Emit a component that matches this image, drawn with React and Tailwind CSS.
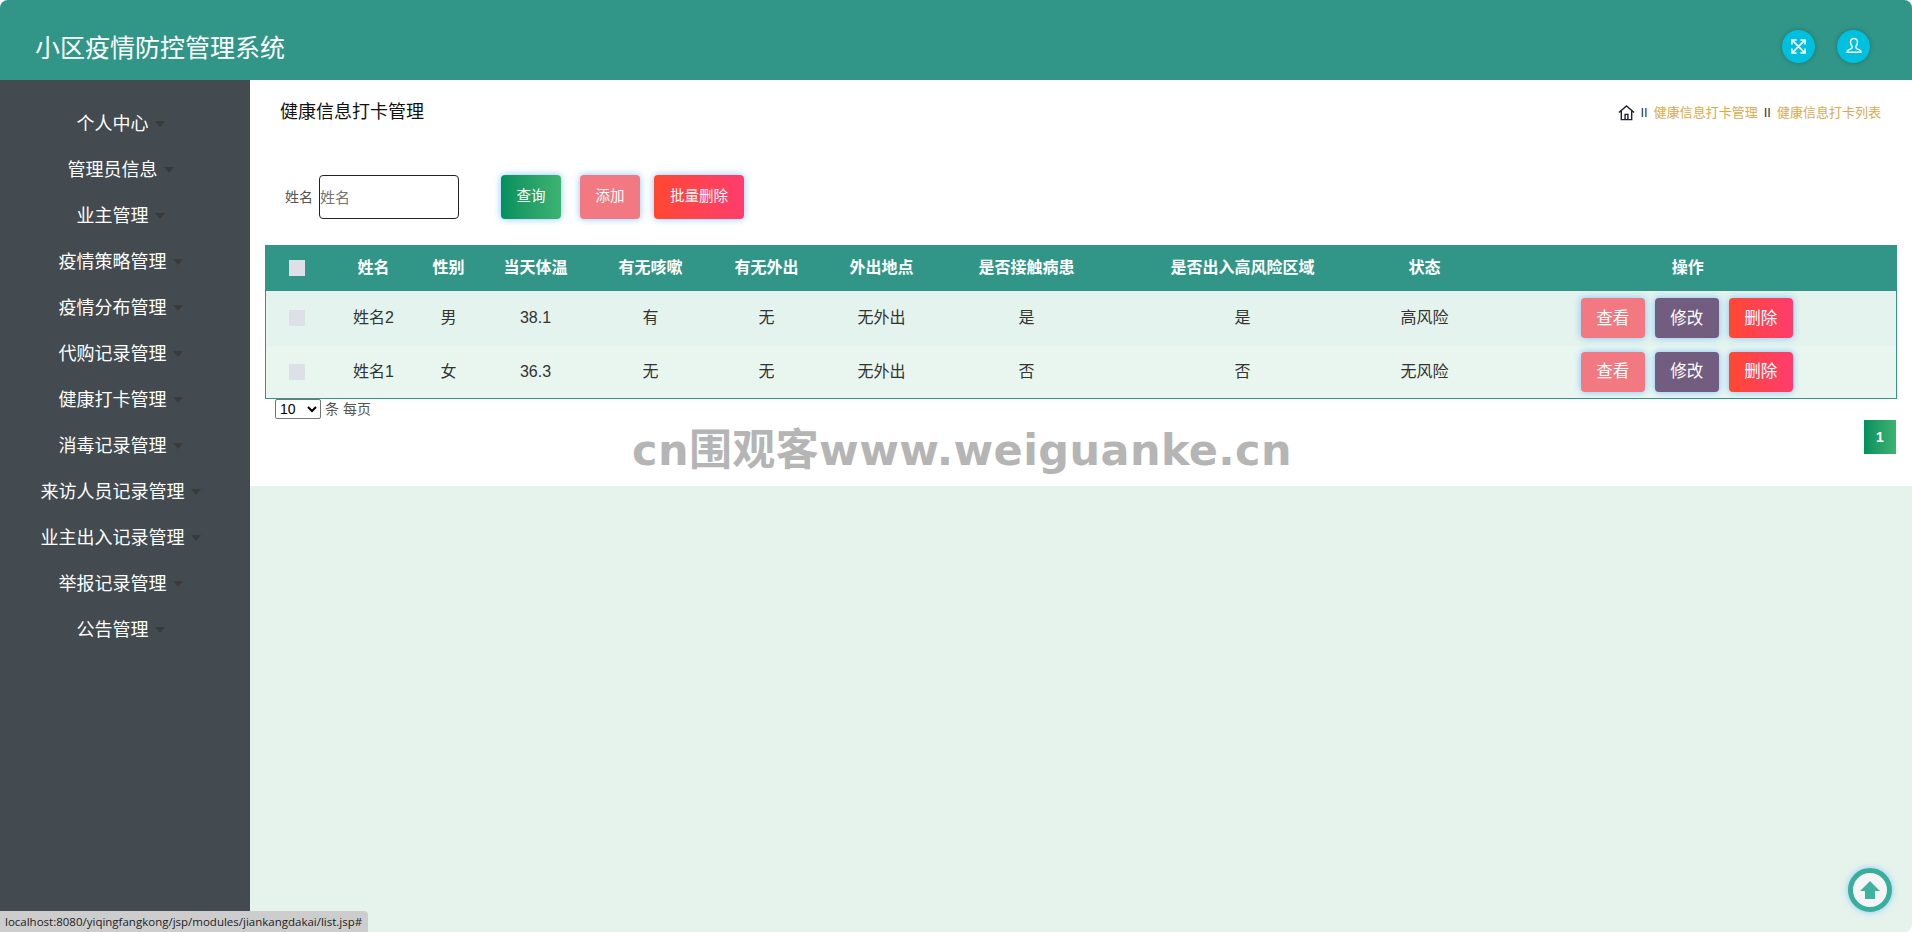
const menus = [
  "个人中心",
  "管理员信息",
  "业主管理",
  "疫情策略管理",
  "疫情分布管理",
  "代购记录管理",
  "健康打卡管理",
  "消毒记录管理",
  "来访人员记录管理",
  "业主出入记录管理",
  "举报记录管理",
  "公告管理",
];

const columns = [
  ["姓名", "w-[92px]"],
  ["性别", "w-[58px]"],
  ["当天体温", "w-[116px]"],
  ["有无咳嗽", "w-[114px]"],
  ["有无外出", "w-[118px]"],
  ["外出地点", "w-[112px]"],
  ["是否接触病患", "w-[178px]"],
  ["是否出入高风险区域", "w-[254px]"],
  ["状态", "w-[110px]"],
];

const rows = [
  { cls: "h-[55px] bg-[#e4f3ed]", cells: ["姓名2", "男", "38.1", "有", "无", "无外出", "是", "是", "高风险"] },
  { cls: "h-[53px] bg-[#e9f6f0]", cells: ["姓名1", "女", "36.3", "无", "无", "无外出", "否", "否", "无风险"] },
];

const glow = "shadow-[0_0_7px_rgba(90,175,255,0.75)]";

function RowButton({ color, children }) {
  return (
    <button className={`w-16 h-10 rounded text-[16.5px] text-white ${color} ${glow}`}>
      {children}
    </button>
  );
}

export default function App() {
  return (
    <div className="relative flex flex-col h-screen overflow-hidden rounded-t-lg rounded-br-lg bg-[#e6f3ec] font-['Liberation_Sans','Noto_Sans_CJK_SC',sans-serif]">
      <header className="h-20 shrink-0 flex items-center bg-[#319688] pl-[35px] pr-[42px]">
        <h1 className="flex-1 text-[25px] text-white mt-[17px]">小区疫情防控管理系统</h1>
        <div className="flex items-center gap-[22px] mt-[12px]">
          <span className="w-[33px] h-[33px] rounded-full bg-[#00c0e0] shadow-[0_0_5px_rgba(0,0,0,0.25)] flex items-center justify-center">
            <svg viewBox="0 0 18 18" className="w-[17px] h-[17px]" fill="none" stroke="white" strokeWidth="1.6">
              <path d="M2 2L16 16M16 2L2 16M2 7V2H7M11 2H16V7M2 11V16H7M16 11V16H11" />
            </svg>
          </span>
          <span className="w-[33px] h-[33px] rounded-full bg-[#00c0e0] shadow-[0_0_5px_rgba(0,0,0,0.25)] flex items-center justify-center">
            <svg viewBox="0 0 18 18" className="w-[18px] h-[18px]" fill="none" stroke="white" strokeWidth="1.4">
              <path d="M9 1.5c-2.200 0-3.500 1.600-3.500 3.800 0 1.600.7 3 1.600 3.900v1.300c0 .6-.5 1-1.100 1.300l-2.600 1.100c-1 .5-1.400 1.200-1.400 2.300h14c0-1.100-.4-1.800-1.400-2.300l-2.600-1.100c-.6-.3-1.100-.7-1.100-1.300V9.200c.9-.9 1.600-2.300 1.600-3.900 0-2.200-1.300-3.800-3.500-3.800z" />
            </svg>
          </span>
        </div>
      </header>

      <div className="flex flex-1 min-h-0">
        <aside className="w-[250px] shrink-0 bg-[#434b50] pt-[21px]">
          {menus.map((m) => (
            <div key={m} className="h-[46px] flex items-center justify-center pr-[9px] text-[18px] text-white">
              <span>{m}</span>
              <span className="ml-[6px] w-0 h-0 border-x-[5px] border-t-[6px] border-x-transparent border-t-[#3a3a3a]" />
            </div>
          ))}
        </aside>

        <main className="flex-1 min-w-0">
          <div className="relative h-[406px] bg-white px-[15px]">
            <div className="flex items-center justify-between h-[62px] pl-[15px] pt-[3px]">
              <h2 className="text-[18px] text-[#111]">健康信息打卡管理</h2>
              <div className="flex items-center text-[13px] text-[#dba94f] gap-[6px] mr-[16px]">
                <svg viewBox="0 0 18 18" className="w-[17px] h-[17px]" fill="none" stroke="#1c2233" strokeWidth="1.5">
                  <path d="M1 9L9 2L17 9M3.500 7.500V16.500H14.500V7.500M7.500 16.500V11H10.500V16.500" />
                </svg>
                <span className="text-[#333]">II</span>
                <span>健康信息打卡管理</span>
                <span className="text-[#333]">II</span>
                <span>健康信息打卡列表</span>
              </div>
            </div>

            <div className="flex items-center mt-[33px] h-11 pl-[20px]">
              <label className="text-[14px] text-[#555] w-[34px]">姓名</label>
              <input
                placeholder="姓名"
                className="w-[140px] h-11 border-[1.5px] border-[#222] rounded text-[15px] placeholder:text-[#757575] bg-white"
              />
              <button className={`ml-[42px] w-[60px] h-11 rounded text-[14.5px] text-white bg-gradient-to-r from-[#00905f] to-[#3cb371] ${glow}`}>查询</button>
              <button className={`ml-[19px] w-[60px] h-11 rounded text-[14.5px] text-white bg-[#f27981] ${glow}`}>添加</button>
              <button className={`ml-[14px] w-[90px] h-11 rounded text-[14.5px] text-white bg-gradient-to-r from-[#ff472f] to-[#ff3c6c] ${glow}`}>批量删除</button>
            </div>

            <table className="mt-[26px] w-full table-fixed border border-[#319688] border-collapse text-[16px] text-[#333]">
              <thead>
                <tr className="h-[45px] bg-[#319688] text-white">
                  <th className="w-[62px]">
                    <span className="block mx-auto w-4 h-4 bg-[#dde0e6]" />
                  </th>
                  {columns.map(([name, w]) => (
                    <th key={name} className={`${w} font-bold`}>{name}</th>
                  ))}
                  <th className="font-bold">操作</th>
                </tr>
              </thead>
              <tbody>
                {rows.map((r) => (
                  <tr key={r.cells[0]} className={r.cls}>
                    <td>
                      <span className="block mx-auto w-4 h-4 bg-[#dde0e6]" />
                    </td>
                    {r.cells.map((c, i) => (
                      <td key={i} className="text-center">{c}</td>
                    ))}
                    <td>
                      <div className="flex justify-center gap-[10px] pr-[2px]">
                        <RowButton color="bg-[#f27981]">查看</RowButton>
                        <RowButton color="bg-[#725d80]">修改</RowButton>
                        <RowButton color="bg-gradient-to-r from-[#ff472f] to-[#ff3c6c]">删除</RowButton>
                      </div>
                    </td>
                  </tr>
                ))}
              </tbody>
            </table>

            <div className="flex items-center h-5 pl-[10px] text-[14px] text-[#555]">
              <select className="w-[46px] h-5 border border-[#767676] rounded-[2px] text-[14px] text-black bg-white">
                <option>10</option>
              </select>
              <span className="ml-[4px]">条 每页</span>
            </div>

            <div className="flex justify-end mt-[1px] mr-px">
              <span className="w-8 h-[34px] flex items-center justify-center text-[14px] font-bold text-white bg-gradient-to-r from-[#00905f] to-[#3cb371]">1</span>
            </div>
          </div>
        </main>
      </div>

      <div className="absolute left-[632px] top-[423px] text-[43px] tracking-[0.4px] leading-[54px] font-bold text-[#b5b5b5] whitespace-nowrap font-['DejaVu_Sans','Noto_Sans_CJK_SC',sans-serif]">
        cn围观客www.weiguanke.cn
      </div>

      <div className="absolute left-[1848px] top-[868px] w-11 h-11 rounded-full border-[5px] border-[#36b09c] bg-[#f5f5f5] shadow-[0_0_6px_rgba(100,180,255,0.7)] flex items-center justify-center">
        <svg viewBox="0 0 20 20" className="w-5 h-5">
          <path d="M10 1 L20 11 H15 V19 H5 V11 H0 Z" fill="#3fb39f" />
        </svg>
      </div>

      <div className="absolute left-0 bottom-0 w-[368px] h-[21px] pl-[5px] flex items-center rounded-tr bg-[#cdcdcd] text-[11.5px] text-[#222] font-['Open_Sans',sans-serif] whitespace-nowrap">
        localhost:8080/yiqingfangkong/jsp/modules/jiankangdakai/list.jsp#
      </div>
    </div>
  );
}
